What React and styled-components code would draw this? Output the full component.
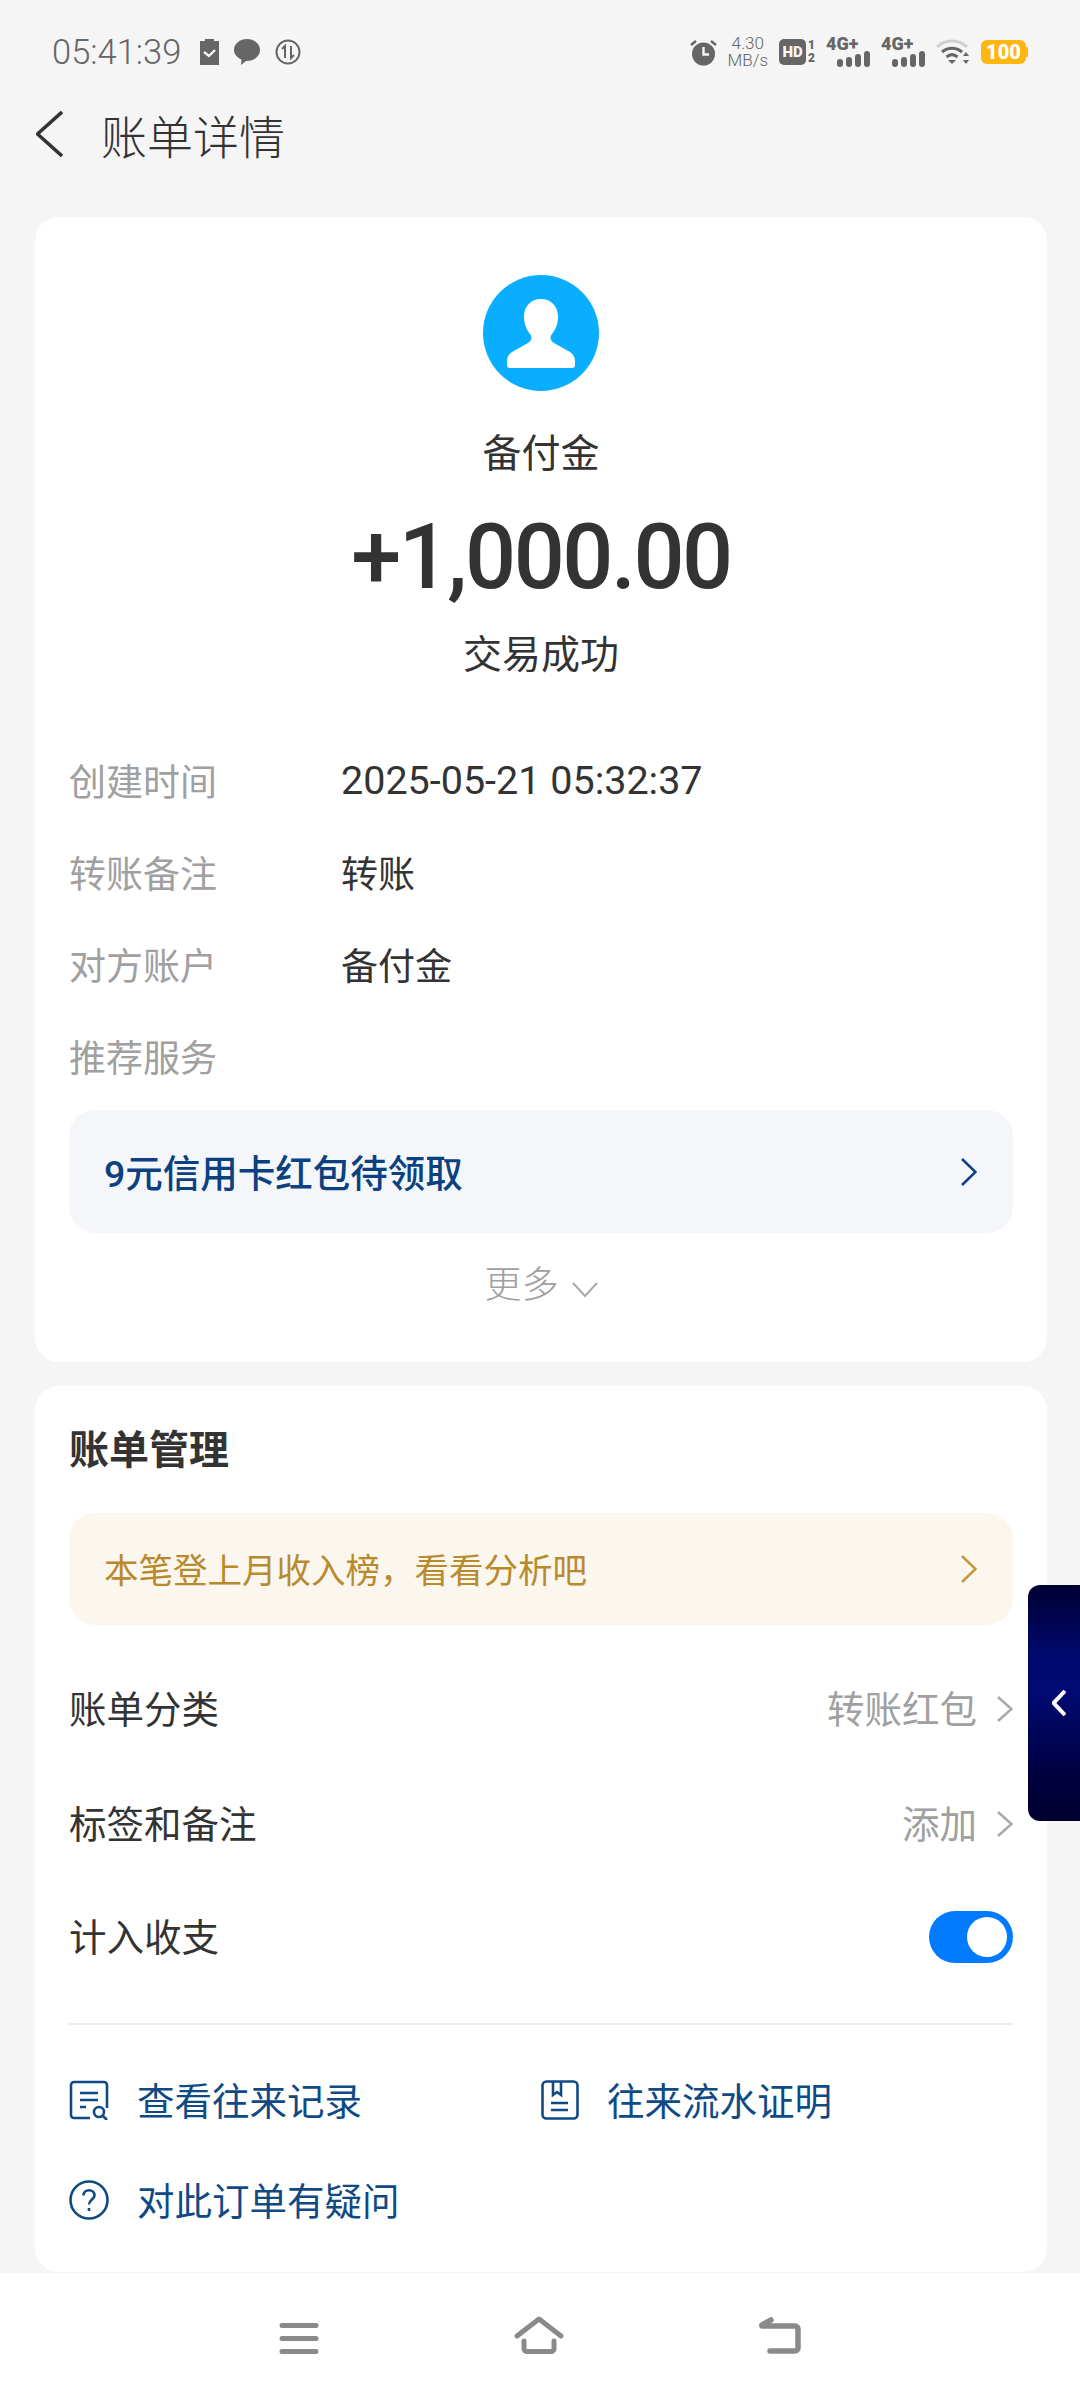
import styled, { createGlobalStyle } from "styled-components";

const GlobalStyle = createGlobalStyle`
  html, body { margin: 0; padding: 0; background: #f5f5f5; }
  * { box-sizing: border-box; }
`;

const cjk = `Roboto, "Noto Sans CJK SC", sans-serif`;

const Page = styled.div`
  position: relative;
  width: 1080px;
  height: 2400px;
  overflow: hidden;
  background: #f5f5f5;
  font-family: ${cjk};
`;

const StatusBar = styled.div`
  height: 104px;
  padding: 0 52px 0 52px;
  display: flex;
  align-items: center;
  color: #666;
`;

const Clock = styled.span`
  font-size: 34.5px;
  font-weight: 300;
  margin-right: 4px;
`;

const StatusLeft = styled.div`
  display: flex;
  align-items: center;
  gap: 15px;
  flex: 1;
`;

const StatusRight = styled.div`
  display: flex;
  align-items: center;
  gap: 11px;
`;

const Speed = styled.div`
  display: flex;
  flex-direction: column;
  align-items: center;
  font-size: 17px;
  font-weight: 300;
  line-height: 17px;
`;

const HdBox = styled.div`
  display: flex;
  align-items: flex-end;
  gap: 2px;
`;

const HdBadge = styled.span`
  width: 27px;
  height: 26px;
  border-radius: 5px;
  background: #666;
  color: #f5f5f5;
  font-size: 15px;
  font-weight: 900;
  display: flex;
  align-items: center;
  justify-content: center;
`;

const HdNums = styled.span`
  font-size: 12px;
  font-weight: 900;
  line-height: 13px;
  display: flex;
  flex-direction: column;
  align-items: center;
`;

const Signal = styled.div`
  width: 44px;
  height: 32px;
  display: flex;
  flex-direction: column;
`;

const SignalLabel = styled.span`
  font-size: 18px;
  font-weight: 900;
  line-height: 15px;
`;

const SignalBars = styled.div`
  display: flex;
  align-items: flex-end;
  justify-content: flex-end;
  gap: 3px;
`;

const Bar = styled.i`
  width: 6px;
  height: ${(p) => p.$h}px;
  border-radius: 3px;
  background: #666;
`;

const Battery = styled.span`
  position: relative;
  width: 45px;
  height: 24px;
  margin-right: 2px;
  border-radius: 6px;
  background: #ffb60f;
  color: #fff;
  font-size: 20px;
  font-weight: 900;
  display: flex;
  align-items: center;
  justify-content: center;

  &::after {
    content: "";
    position: absolute;
    right: -2px;
    top: 7px;
    width: 2px;
    height: 10px;
    background: #ffb60f;
  }
`;

const Header = styled.div`
  height: 66px;
  margin-top: -3px;
  padding-left: 36px;
  display: flex;
  align-items: center;
  gap: 38px;
`;

const Title = styled.h1`
  margin: 0;
  font-size: 46px;
  font-weight: 300;
  color: #333;
`;

const Card = styled.section`
  margin: 0 33px 0 35px;
  padding: 0 34px;
  background: #fff;
  border-radius: 24px;
`;

const FirstCard = styled(Card)`
  margin-top: 50px;
  height: 1145px;
  padding-top: 58px;
`;

const SecondCard = styled(Card)`
  margin-top: 24px;
  height: 886px;
  padding-top: 39px;
`;

const Avatar = styled.div`
  width: 116px;
  height: 116px;
  margin: 0 auto;
  border-radius: 50%;
  background: #0aaeff;
  display: flex;
  align-items: center;
  justify-content: center;
`;

const Payee = styled.div`
  margin-top: 39px;
  font-size: 39px;
  line-height: 48px;
  color: #333;
  text-align: center;
`;

const Amount = styled.div`
  margin-top: 30px;
  font-size: 90px;
  line-height: 100px;
  letter-spacing: -2.5px;
  font-weight: 500;
  color: #333;
  text-align: center;
`;

const Result = styled.div`
  margin-top: 23px;
  font-size: 39px;
  line-height: 48px;
  color: #333;
  text-align: center;
`;

const InfoList = styled.div`
  margin-top: 55px;
  display: flex;
  flex-direction: column;
`;

const InfoRow = styled.div`
  height: 92px;
  display: flex;
  align-items: center;
  font-size: 37px;
`;

const InfoLabel = styled.span`
  width: 272px;
  color: #a0a0a0;
`;

const InfoValue = styled.span`
  color: #333;
  font-size: ${(p) => (p.$num ? "39.5px" : "37px")};
`;

const PromoBanner = styled.div`
  height: ${(p) => p.$h}px;
  margin-top: ${(p) => p.$top}px;
  padding: 0 36px 0 35px;
  border-radius: 26px;
  background: ${(p) => p.$bg};
  color: ${(p) => p.$color};
  display: flex;
  align-items: center;
  justify-content: space-between;
`;

const PromoText = styled.span`
  font-size: ${(p) => p.$size}px;
  font-weight: ${(p) => p.$weight};
  margin-top: -3px;
`;

const More = styled.div`
  margin-top: 29px;
  display: flex;
  align-items: center;
  justify-content: center;
  gap: 13px;
  font-size: 37px;
  line-height: 48px;
  font-weight: 300;
  color: #a0a0a0;
`;

const MoreArrow = styled.svg`
  margin-top: 8px;
`;

const SectionTitle = styled.h2`
  margin: 0;
  font-size: 40px;
  line-height: 52px;
  font-weight: 700;
  color: #333;
`;

const SettingList = styled.div`
  margin-top: 24px;
  display: flex;
  flex-direction: column;
`;

const SettingRow = styled.div`
  height: ${(p) => p.$h}px;
  display: flex;
  align-items: center;
  justify-content: space-between;
  font-size: 37.5px;
  color: #333;
`;

const SettingValue = styled.span`
  display: flex;
  align-items: center;
  gap: 20px;
  color: #a0a0a0;

  svg {
    margin-top: 4px;
  }
`;

const Toggle = styled.span`
  width: 84px;
  height: 52px;
  margin-top: 6px;
  padding: 6px;
  border-radius: 26px;
  background: #007aff;
  display: flex;
  justify-content: flex-end;
`;

const Knob = styled.i`
  width: 40px;
  height: 40px;
  border-radius: 50%;
  background: #fff;
`;

const Divider = styled.div`
  height: 2px;
  margin-top: 34px;
  background: #ececec;
`;

const LinkGrid = styled.div`
  margin-top: 23px;
  display: grid;
  grid-template-columns: 472px 1fr;
  grid-auto-rows: 100px;
`;

const LinkItem = styled.div`
  display: flex;
  align-items: center;
  gap: 28px;
  font-size: 37.5px;
  color: #0f4a85;

  svg {
    margin-top: 4px;
  }
`;

const BottomNav = styled.nav`
  position: absolute;
  left: 0;
  right: 0;
  bottom: 0;
  height: 127px;
  padding-bottom: 46px;
  background: #fff;
  display: flex;
  align-items: flex-end;
  justify-content: center;
  gap: 195px;
`;

const SideTab = styled.div`
  position: absolute;
  right: 0;
  top: 1585px;
  width: 52px;
  height: 236px;
  border-radius: 12px 0 0 12px;
  background: linear-gradient(180deg, #000033 0%, #00096e 30%, #000a72 45%, #000040 80%, #000030 100%);
  display: flex;
  align-items: center;
  padding-left: 24px;
`;

const Chevron = ({ w = 16, h = 26, color, sw = 3, left }) => (
  <svg width={w} height={h} viewBox={`0 0 ${w} ${h}`} fill="none">
    <path
      d={left ? `M${w - 1} 1L1.5 ${h / 2}L${w - 1} ${h - 1}` : `M1 1L${w - 1.5} ${h / 2}L1 ${h - 1}`}
      stroke={color}
      strokeWidth={sw}
    />
  </svg>
);

const SignalIcon = () => (
  <Signal>
    <SignalLabel>4G+</SignalLabel>
    <SignalBars>
      <Bar $h={8} />
      <Bar $h={10} />
      <Bar $h={13} />
      <Bar $h={16} />
    </SignalBars>
  </Signal>
);

const App = () => (
  <Page>
    <GlobalStyle />
    <StatusBar>
      <StatusLeft>
        <Clock>05:41:39</Clock>
        <svg width="19" height="26" viewBox="0 0 19 26">
          <path d="M5 0h9v2h5v24H0V2h5z" fill="#666" />
          <path d="M4 13l5 4 6-6" stroke="#f5f5f5" strokeWidth="2.4" fill="none" />
        </svg>
        <svg width="26" height="26" viewBox="0 0 26 26">
          <path d="M13 0c7 0 13 4.7 13 11s-6 11-13 11h-1l-5 4 .5-5.500C3 18.500 0 15 0 11 0 4.700 6 0 13 0z" fill="#666" />
        </svg>
        <svg width="26" height="26" viewBox="0 0 26 26" fill="none" stroke="#666">
          <circle cx="13" cy="13" r="11.5" strokeWidth="2" />
          <path d="M10 19V7L7 10M16 7v12l3-3" strokeWidth="2" />
        </svg>
      </StatusLeft>
      <StatusRight>
        <svg width="27" height="27" viewBox="0 0 27 27" fill="none">
          <circle cx="13.5" cy="15" r="11.5" fill="#666" />
          <path d="M13.5 8v7.500H19" stroke="#f5f5f5" strokeWidth="2.4" />
          <path d="M1 6l5-4M26 6l-5-4" stroke="#666" strokeWidth="2.4" />
        </svg>
        <Speed>
          <span>4.30</span>
          <span>MB/s</span>
        </Speed>
        <HdBox>
          <HdBadge>HD</HdBadge>
          <HdNums>
            <span>1</span>
            <span>2</span>
          </HdNums>
        </HdBox>
        <SignalIcon />
        <SignalIcon />
        <svg width="34" height="26" viewBox="0 0 34 26" fill="none">
          <path d="M1 8C9 0 23 0 31 8" stroke="#cfcfcf" strokeWidth="3" />
          <path d="M6 13c6-5 14-5 20 0M10.5 18c3.500-3 7.500-3 11 0" stroke="#666" strokeWidth="3" />
          <path d="M12 21h8l-4 4z" fill="#666" />
          <path d="M30 13l-3 4h6zM30 25l-3-4h6z" fill="#666" />
        </svg>
        <Battery>100</Battery>
      </StatusRight>
    </StatusBar>

    <Header>
      <Chevron left w={27} h={46} color="#333" sw={3.5} />
      <Title>账单详情</Title>
    </Header>

    <FirstCard>
      <Avatar>
        <svg width="68" height="69" viewBox="0 0 68 69">
          <path
            d="M34 0C44 0 51 7 51 18C51 26 48 31 45 35C42 39 44 42 47 44L63 53C66 55 68 58 68 62V66C68 68 67 69 65 69H3C1 69 0 68 0 66V62C0 58 2 55 5 53L21 44C24 42 26 39 23 35C20 31 17 26 17 18C17 7 24 0 34 0Z"
            fill="#fff"
          />
        </svg>
      </Avatar>
      <Payee>备付金</Payee>
      <Amount>+1,000.00</Amount>
      <Result>交易成功</Result>
      <InfoList>
        <InfoRow>
          <InfoLabel>创建时间</InfoLabel>
          <InfoValue $num>2025-05-21 05:32:37</InfoValue>
        </InfoRow>
        <InfoRow>
          <InfoLabel>转账备注</InfoLabel>
          <InfoValue>转账</InfoValue>
        </InfoRow>
        <InfoRow>
          <InfoLabel>对方账户</InfoLabel>
          <InfoValue>备付金</InfoValue>
        </InfoRow>
        <InfoRow>
          <InfoLabel>推荐服务</InfoLabel>
        </InfoRow>
      </InfoList>
      <PromoBanner $h={123} $top={8} $bg="#f4f6fa" $color="#0b4180">
        <PromoText $size={37.5} $weight={500}>9元信用卡红包待领取</PromoText>
        <Chevron w={16} h={28} color="#0b4180" sw={2.5} />
      </PromoBanner>
      <More>
        更多
        <MoreArrow width="26" height="16" viewBox="0 0 26 16" fill="none">
          <path d="M1 1l12 13L25 1" stroke="#a8a8a8" strokeWidth="2" />
        </MoreArrow>
      </More>
    </FirstCard>

    <SecondCard>
      <SectionTitle>账单管理</SectionTitle>
      <PromoBanner $h={112} $top={36} $bg="#fbf7ef" $color="#b98a2c">
        <PromoText $size={34.5} $weight={400}>本笔登上月收入榜，看看分析吧</PromoText>
        <Chevron w={16} h={28} color="#c8963c" sw={2.5} />
      </PromoBanner>
      <SettingList>
        <SettingRow $h={115}>
          账单分类
          <SettingValue>
            转账红包
            <Chevron w={16} h={26} color="#a8a8a8" sw={2.5} />
          </SettingValue>
        </SettingRow>
        <SettingRow $h={115}>
          标签和备注
          <SettingValue>
            添加
            <Chevron w={16} h={26} color="#a8a8a8" sw={2.5} />
          </SettingValue>
        </SettingRow>
        <SettingRow $h={110}>
          计入收支
          <Toggle>
            <Knob />
          </Toggle>
        </SettingRow>
      </SettingList>
      <Divider />
      <LinkGrid>
        <LinkItem>
          <svg width="40" height="40" viewBox="0 0 40 40" fill="none" stroke="#0f4a85" strokeWidth="2.6">
            <path d="M21 38H5a3 3 0 0 1-3-3V5a3 3 0 0 1 3-3h30a3 3 0 0 1 3 3v23" />
            <path d="M11 13h18M11 20h18M11 27h6" />
            <circle cx="30" cy="32" r="5" />
            <path d="M34 36l4 4" />
          </svg>
          查看往来记录
        </LinkItem>
        <LinkItem>
          <svg width="38" height="40" viewBox="0 0 38 40" fill="none" stroke="#0f4a85" strokeWidth="2.6">
            <rect x="1.5" y="1.5" width="35" height="37" rx="4" />
            <path d="M12 2v13l4-3 4 3V2M10 23h17M10 30h17" />
          </svg>
          往来流水证明
        </LinkItem>
        <LinkItem>
          <svg width="40" height="40" viewBox="0 0 40 40" fill="none" stroke="#0f4a85" strokeWidth="2.6">
            <circle cx="20" cy="20" r="18.5" />
            <path d="M14.5 15.5c0-7 11-7 11 0 0 4-5.500 4-5.500 9" />
            <path d="M20 28v3" />
          </svg>
          对此订单有疑问
        </LinkItem>
      </LinkGrid>
    </SecondCard>

    <SideTab>
      <Chevron left w={14} h={26} color="#fff" sw={4} />
    </SideTab>

    <BottomNav>
      <svg width="40" height="31" viewBox="0 0 40 31" fill="none" stroke="#8a8a8a" strokeWidth="5" strokeLinecap="round">
        <path d="M3 2.5h34M3 15.5h34M3 28.500h34" />
      </svg>
      <svg width="50" height="38" viewBox="0 0 50 38" fill="none" stroke="#8a8a8a" strokeWidth="5" strokeLinecap="round" strokeLinejoin="round">
        <path d="M3 20L25 3l22 17" />
        <path d="M10 25v7.500a3 3 0 0 0 3 3h24a3 3 0 0 0 3-3V25" />
      </svg>
      <svg width="42" height="37" viewBox="0 0 42 37" fill="none" stroke="#8a8a8a" strokeWidth="5.5" strokeLinecap="round" strokeLinejoin="round">
        <path d="M3 9h33a3 3 0 0 1 3 3v19a3 3 0 0 1-3 3H11" />
        <path d="M3 8l9-5" />
      </svg>
    </BottomNav>
  </Page>
);

export default App;
